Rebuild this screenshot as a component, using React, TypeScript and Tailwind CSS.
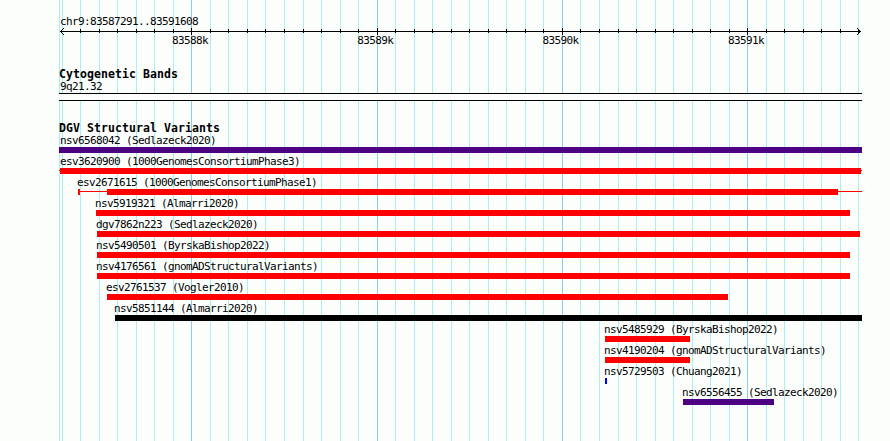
import React from 'react';

type Segment = { start: number; end: number };

type Variant = {
  id: string;
  study: string;
  labelX: number;
  color: string;
  segments: Segment[];
  connector?: Segment;
};

const MINOR_LINES = [
  59, 62, 80, 99, 117, 136, 154, 173, 210, 228, 247, 265, 284, 303, 321, 340, 358, 395, 414, 432, 451, 469, 488,
  506, 525, 543, 580, 599, 618, 636, 655, 673, 692, 710, 729, 766, 784, 803, 821, 840, 858,
];

const MAJOR_LINES = [191, 377, 562, 747];

const RULER_LABELS = ['83588k', '83589k', '83590k', '83591k'];

const RED = 'bg-[#ff0000]';
const INDIGO = 'bg-[#4b0082]';

const VARIANTS: Variant[] = [
  { id: 'nsv6568042', study: 'Sedlazeck2020', labelX: 60, color: INDIGO, segments: [{ start: 59, end: 862 }] },
  {
    id: 'esv3620900',
    study: '1000GenomesConsortiumPhase3',
    labelX: 60,
    color: RED,
    segments: [{ start: 60, end: 861 }],
    connector: { start: 59, end: 862 },
  },
  {
    id: 'esv2671615',
    study: '1000GenomesConsortiumPhase1',
    labelX: 77,
    color: RED,
    segments: [{ start: 78, end: 80 }, { start: 107, end: 838 }],
    connector: { start: 80, end: 862 },
  },
  { id: 'nsv5919321', study: 'Almarri2020', labelX: 95, color: RED, segments: [{ start: 96, end: 850 }] },
  { id: 'dgv7862n223', study: 'Sedlazeck2020', labelX: 96, color: RED, segments: [{ start: 97, end: 860 }] },
  { id: 'nsv5490501', study: 'ByrskaBishop2022', labelX: 96, color: RED, segments: [{ start: 97, end: 850 }] },
  { id: 'nsv4176561', study: 'gnomADStructuralVariants', labelX: 96, color: RED, segments: [{ start: 97, end: 850 }] },
  { id: 'esv2761537', study: 'Vogler2010', labelX: 106, color: RED, segments: [{ start: 107, end: 728 }] },
  { id: 'nsv5851144', study: 'Almarri2020', labelX: 114, color: 'bg-black', segments: [{ start: 115, end: 862 }] },
  { id: 'nsv5485929', study: 'ByrskaBishop2022', labelX: 604, color: RED, segments: [{ start: 605, end: 690 }] },
  { id: 'nsv4190204', study: 'gnomADStructuralVariants', labelX: 604, color: RED, segments: [{ start: 605, end: 690 }] },
  { id: 'nsv5729503', study: 'Chuang2021', labelX: 604, color: 'bg-[#0000ff]', segments: [{ start: 605, end: 607 }] },
  { id: 'nsv6556455', study: 'Sedlazeck2020', labelX: 682, color: INDIGO, segments: [{ start: 683, end: 774 }] },
];

function GridLines() {
  return (
    <svg className="absolute inset-0" width="890" height="441" shapeRendering="crispEdges">
      {MINOR_LINES.map((x) => (
        <rect key={x} x={x} y="0" width="1" height="441" fill="#afeeee" />
      ))}
      {MAJOR_LINES.map((x) => (
        <rect key={x} x={x} y="0" width="1" height="441" fill="#87ceeb" />
      ))}
    </svg>
  );
}

function Ruler() {
  return (
    <svg className="block" width="890" height="8" shapeRendering="crispEdges">
      <rect x="60" y="4" width="801" height="1" />
      {MINOR_LINES.filter((x) => x > 62).map((x) => (
        <rect key={x} x={x} y="2" width="1" height="4" />
      ))}
      {MAJOR_LINES.map((x) => (
        <rect key={x} x={x} y="1" width="1" height="7" />
      ))}
      {[1, 2, 3].map((d) => (
        <g key={d}>
          <rect x={60 + d} y={4 - d} width="1" height="1" />
          <rect x={60 + d} y={4 + d} width="1" height="1" />
          <rect x={860 - d} y={4 - d} width="1" height="1" />
          <rect x={860 - d} y={4 + d} width="1" height="1" />
        </g>
      ))}
    </svg>
  );
}

function VariantRow({ variant }: { variant: Variant }) {
  const { id, study, labelX, color, segments, connector } = variant;

  return (
    <div className="h-[21px]">
      <div className="h-[15px] leading-[17px]" style={{ paddingLeft: labelX }}>
        {id} ({study})
      </div>
      <div className="relative flex h-1.5">
        {connector && (
          <div
            className={`absolute top-0.5 h-px ${color}`}
            style={{ left: connector.start, width: connector.end - connector.start }}
          />
        )}
        {segments.map((s, i) => (
          <div
            key={s.start}
            className={`h-1.5 shrink-0 ${color}`}
            style={{ marginLeft: s.start - (i > 0 ? segments[i - 1].end : 0), width: s.end - s.start }}
          />
        ))}
      </div>
    </div>
  );
}

function TrackTitle({ children }: { children: React.ReactNode }) {
  return <h2 className="pl-[59px] text-[11.5px] leading-[14px] font-bold tracking-[0.077px]">{children}</h2>;
}

export default function App() {
  return (
    <div className="relative h-[441px] w-[890px] overflow-hidden bg-[#fcfefc] font-['DejaVu_Sans_Mono',monospace] text-[11px] tracking-[-0.622px] whitespace-nowrap text-black">
      <GridLines />

      <main className="relative flex flex-col">
        {/* Region and scale */}
        <section className="pt-3.5">
          <div className="h-[13px] pl-[60px] leading-[15px]">chr9:83587291..83591608</div>
          <Ruler />
          <div className="flex h-[13px] gap-[149.3px] pl-[172px] leading-[11px]">
            {RULER_LABELS.map((label) => (
              <span key={label} className="w-9">
                {label}
              </span>
            ))}
          </div>
        </section>

        {/* Cytogenetic bands */}
        <section className="pt-[19px]">
          <TrackTitle>Cytogenetic Bands</TrackTitle>
          <div className="h-3 pl-[60px] leading-[11px]">9q21.32</div>
          <div className="ml-[59px] h-2 w-[803px] border-y border-black bg-[#fcfefc]" />
        </section>

        {/* Structural variants */}
        <section className="pt-5">
          <TrackTitle>DGV Structural Variants</TrackTitle>
          <div className="-mt-[3px]">
            {VARIANTS.map((variant) => (
              <VariantRow key={variant.id} variant={variant} />
            ))}
          </div>
        </section>
      </main>
    </div>
  );
}
